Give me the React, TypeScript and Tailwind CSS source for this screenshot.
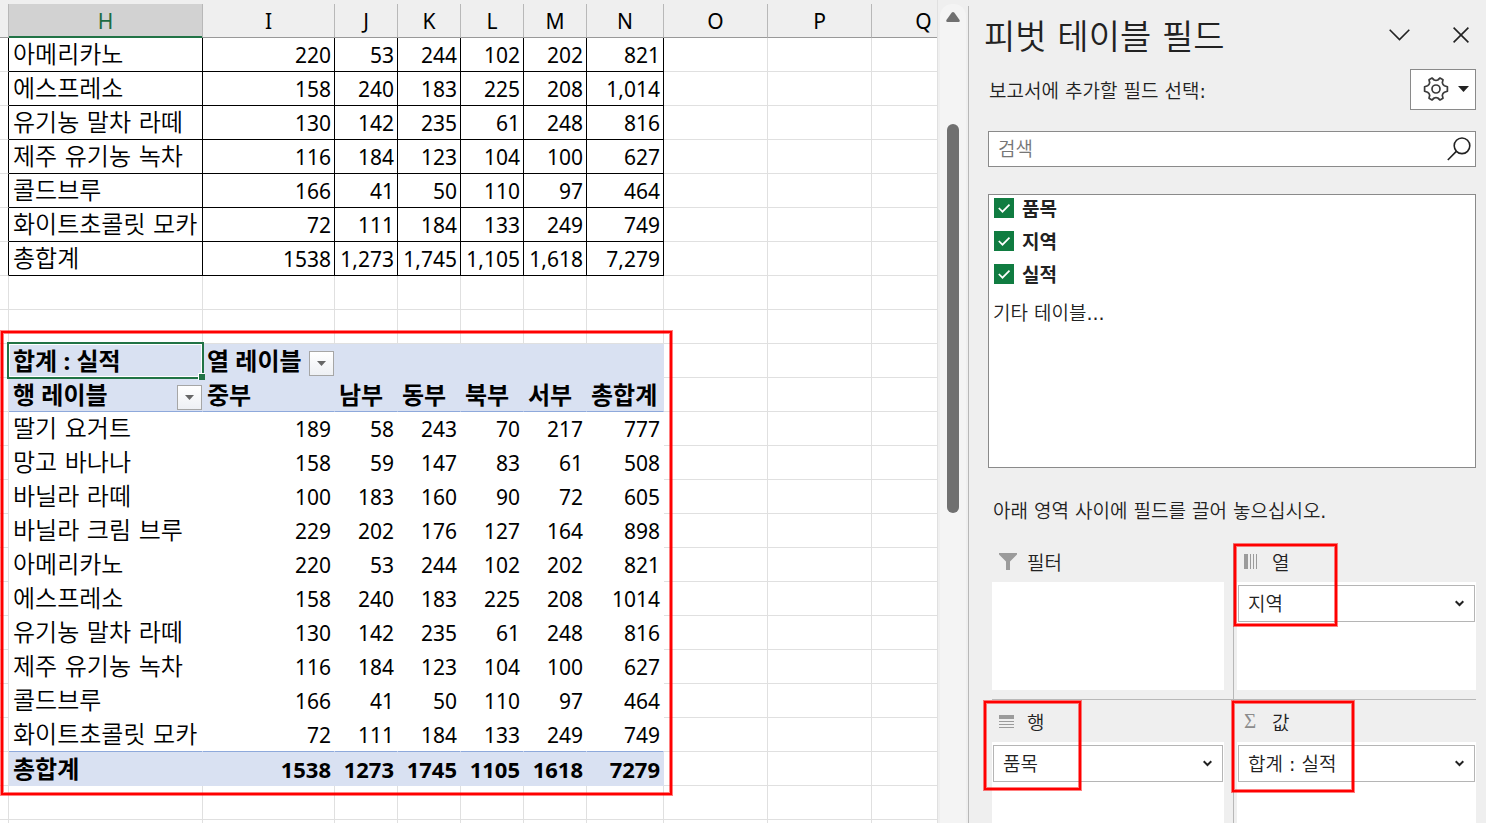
import type { ReactNode } from 'react';
import clsx from 'clsx';

// ---------- sheet data ----------

const COLUMNS = [
  { name: 'H', width: 'w-[194px]' },
  { name: 'I', width: 'w-[132px]' },
  { name: 'J', width: 'w-[63px]' },
  { name: 'K', width: 'w-[63px]' },
  { name: 'L', width: 'w-[63px]' },
  { name: 'M', width: 'w-[63px]' },
  { name: 'N', width: 'w-[77px]' },
  { name: 'O', width: 'w-[104px]' },
  { name: 'P', width: 'w-[104px]' },
  { name: 'Q', width: 'w-[104px]' },
];

const SUMMARY = [
  ['아메리카노', '220', '53', '244', '102', '202', '821'],
  ['에스프레소', '158', '240', '183', '225', '208', '1,014'],
  ['유기농 말차 라떼', '130', '142', '235', '61', '248', '816'],
  ['제주 유기농 녹차', '116', '184', '123', '104', '100', '627'],
  ['콜드브루', '166', '41', '50', '110', '97', '464'],
  ['화이트초콜릿 모카', '72', '111', '184', '133', '249', '749'],
  ['총합계', '1538', '1,273', '1,745', '1,105', '1,618', '7,279'],
];

const PIVOT = [
  ['딸기 요거트', '189', '58', '243', '70', '217', '777'],
  ['망고 바나나', '158', '59', '147', '83', '61', '508'],
  ['바닐라 라떼', '100', '183', '160', '90', '72', '605'],
  ['바닐라 크림 브루', '229', '202', '176', '127', '164', '898'],
  ['아메리카노', '220', '53', '244', '102', '202', '821'],
  ['에스프레소', '158', '240', '183', '225', '208', '1014'],
  ['유기농 말차 라떼', '130', '142', '235', '61', '248', '816'],
  ['제주 유기농 녹차', '116', '184', '123', '104', '100', '627'],
  ['콜드브루', '166', '41', '50', '110', '97', '464'],
  ['화이트초콜릿 모카', '72', '111', '184', '133', '249', '749'],
];

const PIVOT_TOTAL = ['총합계', '1538', '1273', '1745', '1105', '1618', '7279'];
const REGIONS = ['중부', '남부', '동부', '북부', '서부', '총합계'];
const FIELDS = ['품목', '지역', '실적'];

const KO = "font-['DejaVu_Sans','Noto_Sans_CJK_KR_DemiLight','Noto_Sans_CJK_KR',sans-serif]";
const KO_BOLD = "font-['Noto_Sans','Noto_Sans_CJK_KR',sans-serif] font-bold";
const NUM = "font-['Noto_Sans','Noto_Sans_CJK_KR',sans-serif]";

// ---------- sheet ----------

type Kind = 'blank' | 'summary' | 'pivot' | 'pivotTop' | 'pivotHead' | 'pivotLast' | 'pivotTotal';

const CELL_STYLE: Record<Kind, string> = {
  blank: 'border-[#e0e0e0]',
  summary: 'border-black',
  pivot: 'border-white',
  pivotTop: 'border-[#d9e1f2] bg-[#d9e1f2]',
  pivotHead: 'border-r-[#d9e1f2] border-b-[#8ea9db] bg-[#d9e1f2]',
  pivotLast: 'border-r-white border-b-[#8ea9db]',
  pivotTotal: 'border-[#d9e1f2] bg-[#d9e1f2]',
};

function Cell({ kind = 'blank', text, children }: { kind?: Kind; text?: string; children?: ReactNode }) {
  const numeric = text !== undefined && /^[\d,]+$/.test(text);
  const bold = kind === 'pivotTop' || kind === 'pivotHead' || kind === 'pivotTotal';
  return (
    <td
      className={clsx(
        'relative h-[34px] border-r border-b p-0 leading-8 whitespace-nowrap',
        CELL_STYLE[kind],
        numeric ? 'pr-[3px] text-right' : 'pl-1 text-[24px]',
        numeric && (bold ? 'text-[22px]' : 'text-[21px]'),
        bold ? KO_BOLD : numeric ? NUM : KO,
      )}
    >
      {text}
      {children}
    </td>
  );
}

function Row({ kind = 'blank', cells = [] }: { kind?: Kind; cells?: string[] }) {
  return (
    <tr>
      <td className={clsx('h-[34px] border-r border-b border-[#e0e0e0] p-0', kind === 'summary' && 'border-r-black')} />
      {COLUMNS.map((col, i) => (
        <Cell key={col.name} kind={i < 7 ? kind : 'blank'} text={cells[i]}>
          {kind === 'pivotTop' && i === 0 && <Selection />}
          {kind === 'pivotTop' && i === 1 && <FilterButton label="열 레이블 필터" />}
          {kind === 'pivotHead' && i === 0 && <FilterButton label="행 레이블 필터" />}
        </Cell>
      ))}
    </tr>
  );
}

function Selection() {
  return (
    <span className="absolute -inset-0.5 z-10 border-2 border-[#217346] shadow-[inset_0_0_0_1px_#fff]">
      <span className="absolute -right-[3px] -bottom-[3px] size-[7px] border-t border-l border-white bg-[#217346]" />
    </span>
  );
}

function FilterButton({ label }: { label: string }) {
  return (
    <button
      type="button"
      aria-label={label}
      className="absolute right-0 bottom-px flex size-[25px] items-center justify-center border border-[#a6a6a6] bg-linear-to-b from-white to-[#eef0f4]"
    >
      <svg width="9" height="5" viewBox="0 0 9 5" fill="#666">
        <path d="M0 0h9L4.500 5z" />
      </svg>
    </button>
  );
}

function Sheet() {
  return (
    <main className="relative min-w-0 flex-1 overflow-hidden border-r border-[#e0e0e0] bg-white">
      <table className="w-max table-fixed border-separate border-spacing-0 border-t-4 border-[#efefef] text-black">
        <thead>
          <tr>
            <th className="h-[34px] w-[9px] border-r border-b border-r-[#b8b8b8] border-b-[#999] bg-[#efefef] p-0" />
            {COLUMNS.map(col => (
              <th
                key={col.name}
                className={clsx(
                  'h-[34px] border-r border-b border-r-[#b8b8b8] p-0 text-[21px] leading-8 font-normal',
                  NUM,
                  col.width,
                  col.name === 'H'
                    ? 'border-b-[#217346] bg-[#d2d2d2] text-[#1e6b41] shadow-[inset_0_-1px_0_#217346]'
                    : 'border-b-[#999] bg-[#efefef]',
                )}
              >
                {col.name}
              </th>
            ))}
          </tr>
        </thead>
        <tbody>
          {SUMMARY.map(cells => <Row key={cells[0]} kind="summary" cells={cells} />)}
          <Row />
          <Row />
          <Row kind="pivotTop" cells={['합계 : 실적', '열 레이블']} />
          <Row kind="pivotHead" cells={['행 레이블', ...REGIONS]} />
          {PIVOT.map((cells, i) => (
            <Row key={cells[0]} kind={i === PIVOT.length - 1 ? 'pivotLast' : 'pivot'} cells={cells} />
          ))}
          <Row kind="pivotTotal" cells={PIVOT_TOTAL} />
          <Row />
          <Row />
        </tbody>
      </table>
      <Callout place="left-px top-[331px] h-[464px] w-[671px]" />
    </main>
  );
}

// red highlight drawn over a region
function Callout({ place }: { place: string }) {
  return (
    <div
      className={clsx(
        'pointer-events-none absolute z-20 border-2 border-[#ff0000] shadow-[0_0_0_1px_#ff000080,inset_0_0_0_1px_#ff000080]',
        place,
      )}
    />
  );
}

function ScrollBar() {
  return (
    <div className="mt-1 mr-0.5 ml-0.5 flex w-[26px] shrink-0 flex-col items-center rounded-t-xl bg-[#f4f4f4] pt-2">
      <svg width="14" height="10" viewBox="0 0 14 10" fill="#707070">
        <path d="M5.600 .8Q7-.7 8.400.8L13.600 8Q14.200 10 12.500 10H1.500Q-.2 10 .4 8z" />
      </svg>
      <div className="mt-[102px] h-[389px] w-3 rounded-full bg-[#707070]" />
    </div>
  );
}

// ---------- field pane ----------

function GearIcon() {
  return (
    <svg width="26" height="26" viewBox="0 0 26 26" fill="none" stroke="#3b3b3b" strokeWidth="1.700" strokeLinejoin="round">
      <path d="M9 2 L11.200 4 Q13 4.700 14.800 4 L17 2 L20 3.700 L19.300 6.700 Q19.600 8.700 21.400 9.700 L24.400 10.800 V15.200 L21.400 16.300 Q19.600 17.300 19.300 19.300 L20 22.300 L17 24 L14.800 22 Q13 21.300 11.200 22 L9 24 L6 22.300 L6.700 19.300 Q6.400 17.300 4.600 16.300 L1.600 15.200 V10.800 L4.600 9.700 Q6.400 8.700 6.700 6.700 L6 3.700 Z" />
      <circle cx="13" cy="13" r="4" />
    </svg>
  );
}

function FunnelIcon() {
  return (
    <svg width="18" height="17" viewBox="0 0 18 17" fill="#9b9b9b">
      <path d="M0 0h18v1.500L11 8.500V17H7V8.500L0 1.500z" />
    </svg>
  );
}

function ColumnsIcon() {
  return (
    <svg width="13" height="15" viewBox="0 0 13 15" fill="#9b9b9b">
      <path d="M0 0h4v15H0zM6 0h1v15H6zM9 0h1v15H9zM12 0h1v15h-1z" />
    </svg>
  );
}

function RowsIcon() {
  return (
    <svg width="15" height="13" viewBox="0 0 15 13" fill="#9b9b9b">
      <path d="M0 0h15v4H0zM0 6h15v1H0zM0 9h15v1H0zM0 12h15v1H0z" />
    </svg>
  );
}

interface AreaProps {
  id: string;
  title: string;
  icon: ReactNode;
  item?: string;
  className: string;
}

function Area({ id, title, icon, item, className }: AreaProps) {
  return (
    <section className={clsx('flex flex-col', className)}>
      <label htmlFor={id} className="flex h-[38px] shrink-0 items-center">
        <span className="flex w-[35px] justify-start pb-1 pl-[7px] leading-none">{icon}</span>
        {title}
      </label>
      <div className="min-h-[108px] flex-1 bg-white px-px pt-[3px]">
        {item && (
          <div className="relative">
            <select id={id} className="h-[37px] w-full appearance-none border border-[#b5b5b5] bg-white pl-[9px]">
              <option>{item}</option>
            </select>
            <svg className="pointer-events-none absolute top-[15px] right-[11px]" width="9" height="7" viewBox="0 0 9 7" fill="none" stroke="#222" strokeWidth="2">
              <path d="M.7 1.200 4.500 5 8.300 1.200" />
            </svg>
          </div>
        )}
      </div>
    </section>
  );
}

function FieldPane() {
  return (
    <aside className={clsx('mt-1.5 flex w-[518px] shrink-0 flex-col border-l border-[#b8b8b8] pr-2.5 pl-[19px] text-[19px] leading-7 text-[#222]', KO)}>
      <header className="flex h-[58px] shrink-0 items-center justify-between">
        <h1 className="-ml-1 pt-1 text-[34px] leading-10">피벗 테이블 필드</h1>
        <div className="flex items-center gap-[43px] pr-[7px]">
          <button type="button" aria-label="작업창 옵션">
            <svg width="21" height="12" viewBox="0 0 21 12" fill="none" stroke="#222" strokeWidth="1.600">
              <path d="M.7 .8 10.500 10.600 20.300 .8" />
            </svg>
          </button>
          <button type="button" aria-label="닫기">
            <svg width="16" height="16" viewBox="0 0 16 16" fill="none" stroke="#222" strokeWidth="1.600">
              <path d="M.6 .6 15.400 15.400M15.400 .6 .6 15.400" />
            </svg>
          </button>
        </div>
      </header>

      <div className="mt-[5px] flex items-center justify-between">
        <p className="pt-0.5 pl-px">보고서에 추가할 필드 선택:</p>
        <button type="button" aria-label="도구" className="flex h-[41px] w-[66px] items-center gap-[9px] border border-[#8a8a8a] bg-white pb-0.5 pl-3">
          <GearIcon />
          <svg width="11" height="6" viewBox="0 0 11 6" fill="#222">
            <path d="M0 0h11L5.500 6z" />
          </svg>
        </button>
      </div>

      <div className="mt-[21px] flex h-9 shrink-0 items-center border border-[#8a8a8a] bg-white pr-1">
        <input type="text" aria-label="검색" placeholder="검색" className="h-full min-w-0 flex-1 pl-[9px] outline-none placeholder:text-[#767676]" />
        <svg width="24" height="24" viewBox="0 0 24 24" fill="none" stroke="#222" strokeWidth="1.600">
          <circle cx="15" cy="8.800" r="7.800" />
          <path d="M9.300 14.400 .8 23" />
        </svg>
      </div>

      <div className="mt-[27px] h-[274px] shrink-0 border border-[#8a8a8a] bg-white pl-1">
        <ul className="pl-px">
          {FIELDS.map(name => (
            <li key={name} className="h-[33px]">
              <label className={clsx('flex items-start gap-2', KO_BOLD)}>
                <span className="relative mt-[3px] size-5">
                  <input type="checkbox" defaultChecked className="block size-5 appearance-none bg-[#107c41]" />
                  <svg className="pointer-events-none absolute inset-0" width="20" height="20" viewBox="0 0 20 20" fill="none" stroke="#fff" strokeWidth="1.700">
                    <path d="M4.800 10 8.500 13.700 15.500 6.700" />
                  </svg>
                </span>
                {name}
              </label>
            </li>
          ))}
        </ul>
        <a href="#tables" className="mt-[5px] block">기타 테이블...</a>
      </div>

      <p className="mt-[29px] ml-[5px]">아래 영역 사이에 필드를 끌어 놓으십시오.</p>

      <div className="relative mt-[19px] ml-1 grid flex-1 grid-cols-2 grid-rows-[auto_1fr]">
        <Area id="filters" title="필터" icon={<FunnelIcon />} className="border-r border-b border-[#b8b8b8] pr-[9px] pb-[9px]" />
        <Area id="columns" title="열" icon={<ColumnsIcon />} item="지역" className="border-b border-[#b8b8b8] pb-[9px] pl-[3px]" />
        <Area id="rows" title="행" icon={<RowsIcon />} item="품목" className="border-r border-[#b8b8b8] pt-1 pr-[9px]" />
        <Area
          id="values"
          title="값"
          icon={<span className="font-['Liberation_Serif',serif] text-[21px] text-[#8c8c8c]">Σ</span>}
          item="합계 : 실적"
          className="pt-1 pl-[3px]"
        />
        <Callout place="top-0 left-[242px] h-[82px] w-[103px]" />
        <Callout place="top-[157px] -left-2 h-[89px] w-[97px]" />
        <Callout place="top-[157px] left-[240px] h-[91px] w-[122px]" />
      </div>
    </aside>
  );
}

export default function App() {
  return (
    <div className="flex h-screen overflow-hidden bg-[#efefef]">
      <Sheet />
      <ScrollBar />
      <FieldPane />
    </div>
  );
}
